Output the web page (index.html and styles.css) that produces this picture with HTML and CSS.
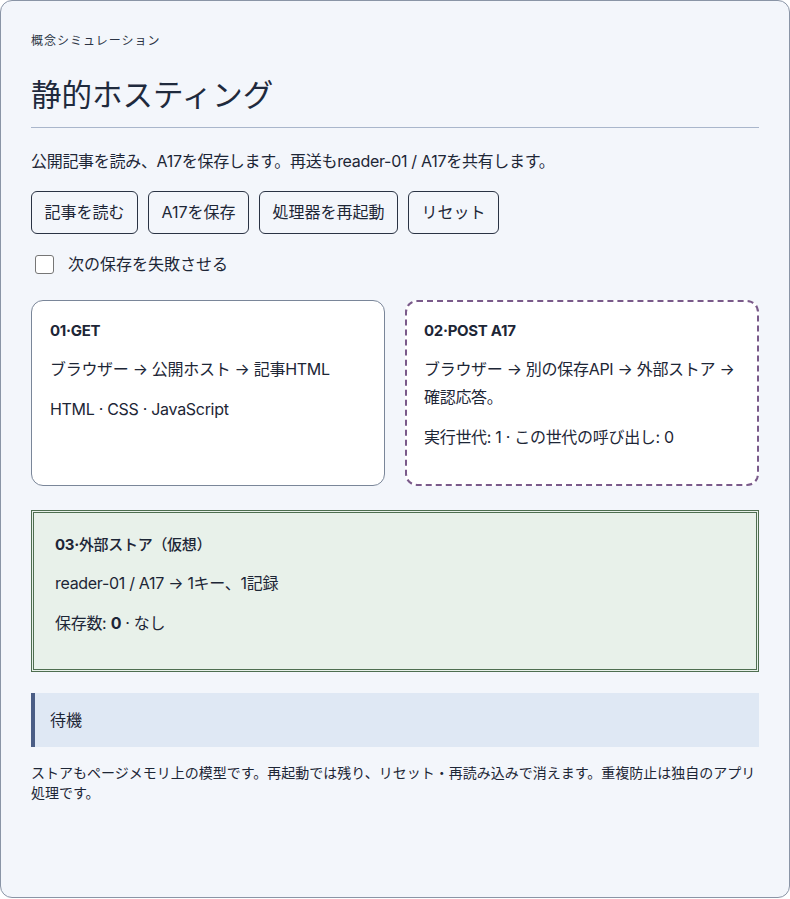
FILE: index.html
```html
<!DOCTYPE html>
<html lang="ja">
<head>
<meta charset="utf-8">
<title>静的ホスティング</title>
<link rel="stylesheet" href="styles.css">
</head>
<body>
<main class="panel">
  <div class="eyebrow">概念シミュレーション</div>
  <h1 class="title">静的ホスティング</h1>
  <p class="lead">公開記事を読み、A17を保存します。再送もreader-01 / A17を共有します。</p>
  <div class="actions">
    <button class="btn" type="button">記事を読む</button>
    <button class="btn" type="button">A17を保存</button>
    <button class="btn" type="button">処理器を再起動</button>
    <button class="btn" type="button">リセット</button>
  </div>
  <label class="check"><span class="box"></span><span>次の保存を失敗させる</span></label>
  <div class="grid">
    <section class="card card-get">
      <h2 class="card-title">01·GET</h2>
      <p class="card-text">ブラウザー → 公開ホスト → 記事HTML</p>
      <p class="card-text">HTML · CSS · JavaScript</p>
    </section>
    <section class="card card-post">
      <h2 class="card-title">02·POST A17</h2>
      <p class="card-text">ブラウザー → 別の保存API → 外部ストア → 確認応答。</p>
      <p class="card-text">実行世代: 1 · この世代の呼び出し: 0</p>
    </section>
  </div>
  <section class="store">
    <h2 class="card-title">03·<span class="soft">外部ストア（仮想）</span></h2>
    <p class="store-text">reader-01 / A17 → 1キー、1記録</p>
    <p class="store-text">保存数: <b>0</b> · なし</p>
  </section>
  <div class="status">待機</div>
  <p class="note">ストアもページメモリ上の模型です。再起動では残り、リセット・再読み込みで消えます。重複防止は独自のアプリ処理です。</p>
</main>
</body>
</html>
```

FILE: styles.css
```css
* { box-sizing: border-box; }
html, body { margin: 0; padding: 0; background: #ffffff; }
body {
  font-family: "Inter", "Noto Sans CJK JP", sans-serif;
  color: #1d2636;
}
.panel {
  width: 790px;
  height: 898px;
  border: 1px solid #8a95a6;
  border-radius: 12px;
  background: #f3f6fb;
  padding: 32px 30px;
}
.eyebrow {
  font-size: 12px;
  line-height: 16px;
  letter-spacing: 1px;
  color: #2b3444;
}
.title {
  margin: 26px 0 0;
  font-size: 30.5px;
  line-height: 40px;
  font-weight: 400;
  color: #1f2a3d;
  padding-bottom: 12px;
  border-bottom: 1px solid #a9b6cb;
}
.lead {
  margin: 21px 0 0;
  font-size: 16px;
  line-height: 24px;
  letter-spacing: -0.3px;
}
.actions {
  display: flex;
  gap: 10px;
  margin-top: 18px;
}
.btn {
  font-family: inherit;
  font-size: 16px;
  line-height: 21px;
  color: #1d2636;
  background: #f3f6fb;
  border: 1px solid #2a3344;
  border-radius: 6px;
  padding: 10px 12.5px;
}
.check {
  display: flex;
  align-items: center;
  gap: 14px;
  margin-top: 18px;
  font-size: 16px;
  line-height: 24px;
}
.box {
  width: 19px;
  height: 19px;
  margin-left: 4px;
  border: 1px solid #767676;
  border-radius: 3px;
  background: #ffffff;
}
.grid {
  display: grid;
  grid-template-columns: 1fr 1fr;
  gap: 20px;
  margin-top: 24px;
}
.card {
  background: #ffffff;
  border-radius: 12px;
  padding: 18px 18px 22px;
}
.card-get { border: 1px solid #7a8699; }
.card-post { border: 2px dashed #7a5a8a; padding: 17px 17px 21px; }
.card-title {
  margin: 0 0 12px;
  font-size: 15px;
  line-height: 24px;
  font-weight: 700;
  letter-spacing: -0.3px;
}
.soft { font-weight: 500; }
.card-text {
  margin: 0 0 12px;
  font-size: 16px;
  line-height: 28px;
  letter-spacing: -0.3px;
}
.store {
  margin-top: 24px;
  border: 3px double #4e6e50;
  background: #e8f1ea;
  padding: 20px 21px 20px;
}
.store-text {
  margin: 0 0 12px;
  font-size: 16px;
  line-height: 28px;
  letter-spacing: -0.3px;
}
.store-text b { font-weight: 700; }
.status {
  margin-top: 21px;
  background: #dfe8f4;
  border-left: 4px solid #4a5d85;
  padding: 16px 15px;
  font-size: 16px;
  line-height: 22px;
}
.note {
  margin: 16px 0 0;
  font-size: 14px;
  line-height: 20px;
}
```
